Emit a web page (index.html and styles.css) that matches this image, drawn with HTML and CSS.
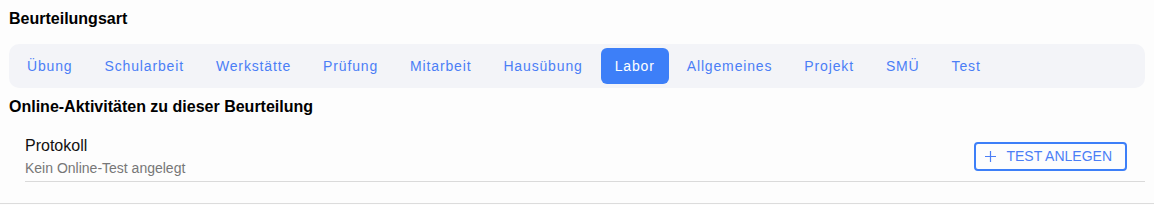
FILE: index.html
```html
<!DOCTYPE html>
<html>
  <head>
    <title>Beurteilungsart</title>
    <meta charset="UTF-8">
    <link rel="stylesheet" href="styles.css">
  </head>
  <body>

<!-- Beurteilungsart -->
<div class="section">
<p class="headline">Beurteilungsart</p>
<div class="tabBar">
<span class="tab">Übung</span>
<span class="tab">Schularbeit</span>
<span class="tab">Werkstätte</span>
<span class="tab">Prüfung</span>
<span class="tab">Mitarbeit</span>
<span class="tab">Hausübung</span>
<span class="tab active">Labor</span>
<span class="tab">Allgemeines</span>
<span class="tab">Projekt</span>
<span class="tab">SMÜ</span>
<span class="tab">Test</span>
</div>

<!-- Online Aktivitaeten -->
<p class="headline second">Online-Aktivitäten zu dieser Beurteilung</p>
<div class="activity">
<div class="activityText">
<div class="activityName">Protokoll</div>
<div class="activityInfo">Kein Online-Test angelegt</div>
</div>
<button class="addButton">
<svg width="11" height="11" viewBox="0 0 11 11"><path d="M5.5 0V11M0 5.5H11" stroke="#4b7ef6" stroke-width="1.2" fill="none"/></svg>
<span>TEST ANLEGEN</span>
</button>
</div>
</div>

  </body>
</html>
```

FILE: styles.css
```css
body{
margin: 0;
background-color: #fdfdfd;
font-family: "Liberation Sans", Arial, sans-serif;
}

.section{
padding: 0 9px;
height: 203px;
border-bottom: 1px solid #dcdcdc;
}

.headline{
margin: 0;
padding-top: 10px;
font-size: 16px;
font-weight: bold;
color: #000;
line-height: 18px;
}

.tabBar{
display: flex;
align-items: center;
gap: 4px;
margin-top: 16px;
padding: 4px;
height: 36px;
background-color: #f3f4f8;
border-radius: 10px;
}

.tab{
padding: 0 14px;
line-height: 36px;
font-size: 14px;
letter-spacing: 0.85px;
color: #4b7ef6;
border-radius: 6px;
}

.active{
background-color: #3d7ff8;
color: white;
}

.activity{
display: flex;
align-items: center;
justify-content: space-between;
margin-left: 16px;
padding: 20px 0 5px 0;
border-bottom: 1px solid #dadada;
}

.activityName{
font-size: 16px;
color: #111;
line-height: 20px;
}

.activityInfo{
margin-top: 4px;
font-size: 14px;
color: #777;
line-height: 16px;
}

.addButton{
display: flex;
align-items: center;
gap: 10px;
margin-right: 18px;
padding: 0 13px 0 9px;
height: 29px;
background: none;
border: 2px solid #3d7ff8;
border-radius: 4px;
font-family: "Liberation Sans", Arial, sans-serif;
font-size: 14px;
color: #4b7ef6;
}
```
